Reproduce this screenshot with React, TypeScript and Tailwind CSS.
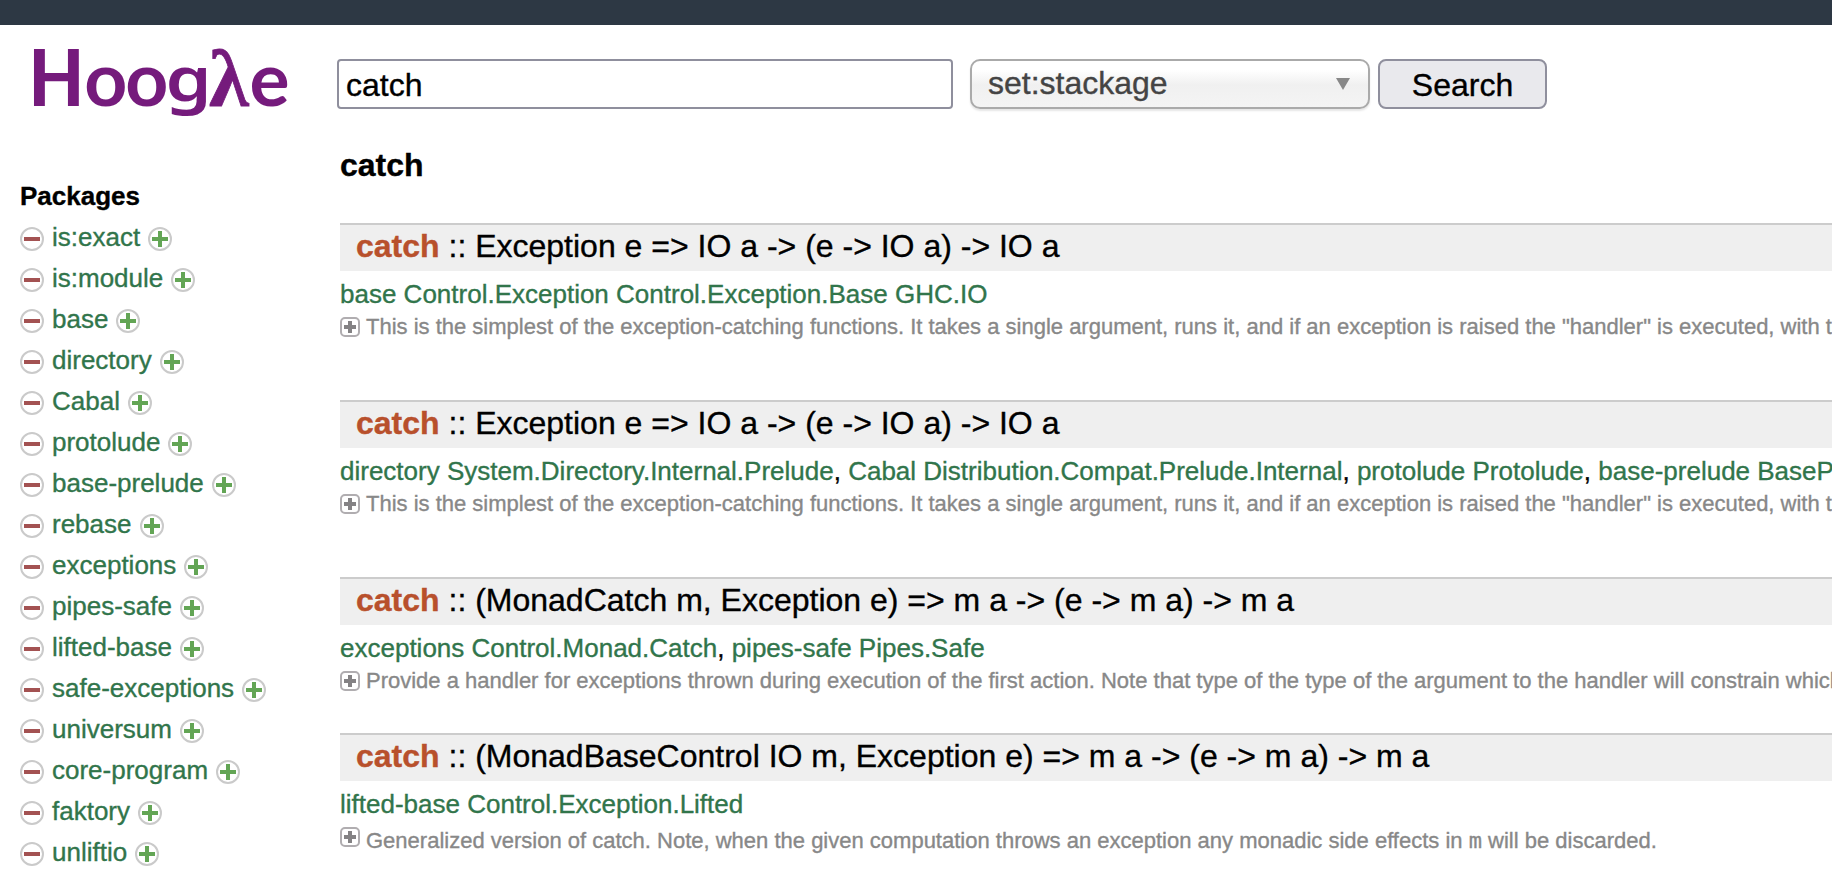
import React from 'react';

interface Source {
  pkg: string;
  modules: string[];
}

interface ResultProps {
  signature: string;
  sources: Source[];
  description: React.ReactNode;
  className: string;
  docClassName?: string;
}

const packages = [
  'is:exact',
  'is:module',
  'base',
  'directory',
  'Cabal',
  'protolude',
  'base-prelude',
  'rebase',
  'exceptions',
  'pipes-safe',
  'lifted-base',
  'safe-exceptions',
  'universum',
  'core-program',
  'faktory',
  'unliftio',
];

const simplest =
  'This is the simplest of the exception-catching functions. It takes a single argument, runs it, and if an exception is raised the "handler" is executed, with the value of the exception passed as an argument.';

const results: ResultProps[] = [
  {
    signature: 'Exception e => IO a -> (e -> IO a) -> IO a',
    sources: [{ pkg: 'base', modules: ['Control.Exception', 'Control.Exception.Base', 'GHC.IO'] }],
    description: simplest,
    className: 'h-[177px]',
  },
  {
    signature: 'Exception e => IO a -> (e -> IO a) -> IO a',
    sources: [
      { pkg: 'directory', modules: ['System.Directory.Internal.Prelude'] },
      { pkg: 'Cabal', modules: ['Distribution.Compat.Prelude.Internal'] },
      { pkg: 'protolude', modules: ['Protolude'] },
      { pkg: 'base-prelude', modules: ['BasePrelude'] },
    ],
    description: simplest,
    className: 'h-[177px]',
  },
  {
    signature: '(MonadCatch m, Exception e) => m a -> (e -> m a) -> m a',
    sources: [
      { pkg: 'exceptions', modules: ['Control.Monad.Catch'] },
      { pkg: 'pipes-safe', modules: ['Pipes.Safe'] },
    ],
    description:
      'Provide a handler for exceptions thrown during execution of the first action. Note that type of the type of the argument to the handler will constrain which exceptions are caught.',
    className: 'h-[156px]',
  },
  {
    signature: '(MonadBaseControl IO m, Exception e) => m a -> (e -> m a) -> m a',
    sources: [{ pkg: 'lifted-base', modules: ['Control.Exception.Lifted'] }],
    description: (
      <>
        Generalized version of catch. Note, when the given computation throws an exception any monadic side effects in{' '}
        <code className="font-['DejaVu_Sans_Mono',monospace] text-[22px] leading-none">m</code> will be discarded.
      </>
    ),
    className: 'h-[141px]',
    docClassName: 'pt-[3px]',
  },
];

const Logo: React.FC = () => (
  <svg className="block h-[80px] w-[290px] overflow-visible" viewBox="0 0 290 80" fill="#751b7c">
    <g fontFamily="Lato, sans-serif" fontWeight="700" fontSize="75">
      <text transform="translate(8.5 62) scale(.92 1)" fontSize="78.5" fontWeight="900">H</text>
      <text x="64.3" y="62">o</text>
      <text x="105.3" y="62">o</text>
      <text transform="translate(145.5 57) scale(1.19 1)" fontFamily="'Noto Sans', sans-serif" fontSize="62" fontWeight="600">g</text>
      <text x="189" y="61.5" fontFamily="'Liberation Serif', serif" fontSize="81" stroke="#751b7c" strokeWidth="0.8">λ</text>
      <text x="229.5" y="62">e</text>
    </g>
  </svg>
);

const RoundIcon: React.FC<{ plus?: boolean }> = ({ plus }) => (
  <svg className="block size-6 shrink-0" viewBox="0 0 24 24">
    <circle cx="12" cy="12" r="11" fill="#fff" stroke="#cacaca" strokeWidth="2" />
    {plus ? (
      <path d="M12 4v16M4 12h16" stroke="#63a555" strokeWidth="4" />
    ) : (
      <path d="M4 12h16" stroke="#a35252" strokeWidth="4" />
    )}
  </svg>
);

const ExpandIcon: React.FC = () => (
  <svg className="block size-5 shrink-0" viewBox="0 0 20 20">
    <rect x="1" y="1" width="18" height="18" rx="4" fill="#fff" stroke="#b0adb0" strokeWidth="2" />
    <path d="M10 4v12M4 10h12" stroke="#848284" strokeWidth="4" />
  </svg>
);

const Result: React.FC<ResultProps> = ({ signature, sources, description, className, docClassName }) => (
  <div className={className}>
    <div className="h-12 border-t-2 border-[#cccccc] bg-[#efefef] pl-4 text-[32px] leading-[42px] text-black">
      <a className="font-bold text-[#b8502c]">catch</a> :: {signature}
    </div>
    <div className="mt-[7px] h-8 text-[26px] leading-8 text-black">
      {sources.map((source, index) => (
        <React.Fragment key={source.pkg}>
          {index > 0 && ', '}
          <a className="text-[#31754b]">{[source.pkg, ...source.modules].join(' ')}</a>
        </React.Fragment>
      ))}
    </div>
    <div className="mt-[7px] flex h-6 items-start gap-1.5 text-[22px] text-[#888888]">
      <ExpandIcon />
      <p className={`leading-5 ${docClassName ?? ''}`}>{description}</p>
    </div>
  </div>
);

const App: React.FC = () => (
  <div className="h-[874px] w-[1832px] overflow-hidden bg-white font-['Liberation_Sans',Arial,sans-serif] whitespace-nowrap [-webkit-text-stroke:0.35px]">
    <div className="h-[25px] bg-[#2d3844]" />

    <div className="flex">
      <aside className="w-[337px] shrink-0 pt-[19px] pl-5">
        <Logo />
        <h2 className="mt-[56px] text-[26px] leading-8 font-bold text-black">Packages</h2>
        <ul className="mt-[6px]">
          {packages.map((name) => (
            <li key={name} className="flex h-[41px] items-center gap-2 text-[26px]">
              <RoundIcon />
              <a className="-mt-1 leading-8 text-[#31754b]">{name}</a>
              <RoundIcon plus />
            </li>
          ))}
        </ul>
      </aside>

      <main className="min-w-0 flex-1 pt-[34px]">
        <form className="flex h-[50px] text-[32px]">
          <input
            className="h-[50px] w-[616px] rounded-[4px] border-2 border-[#8f8f9d] bg-white px-[7px] pt-[2px] text-black outline-none"
            defaultValue="catch"
          />
          <div className="ml-[17px] flex h-[50px] w-[400px] items-center justify-between rounded-[10px] border-2 border-[#aaaaaa] bg-linear-to-b from-white from-20% via-[#f0f0f0] via-52% to-[#f4f4f4] pr-[18px] pl-4 text-[#444444] shadow-[0_2px_2px_rgba(0,0,0,0.1)]">
            <span className="-mt-[3px] leading-[44px]">set:stackage</span>
            <svg className="block h-3 w-[14px]" viewBox="0 0 14 12">
              <path d="M0 0h14L7 12z" fill="#888" />
            </svg>
          </div>
          <button
            type="button"
            className="ml-[8px] h-[50px] w-[169px] rounded-[8px] border-2 border-[#8f8f9d] bg-[#e9e9ed] text-black"
          >
            Search
          </button>
        </form>

        <div className="pl-[3px]">
          <h1 className="mt-[36px] mb-[38px] text-[32px] leading-10 font-bold text-black">catch</h1>
          {results.map((result, index) => (
            <Result key={index} {...result} />
          ))}
        </div>
      </main>
    </div>
  </div>
);

export default App;
